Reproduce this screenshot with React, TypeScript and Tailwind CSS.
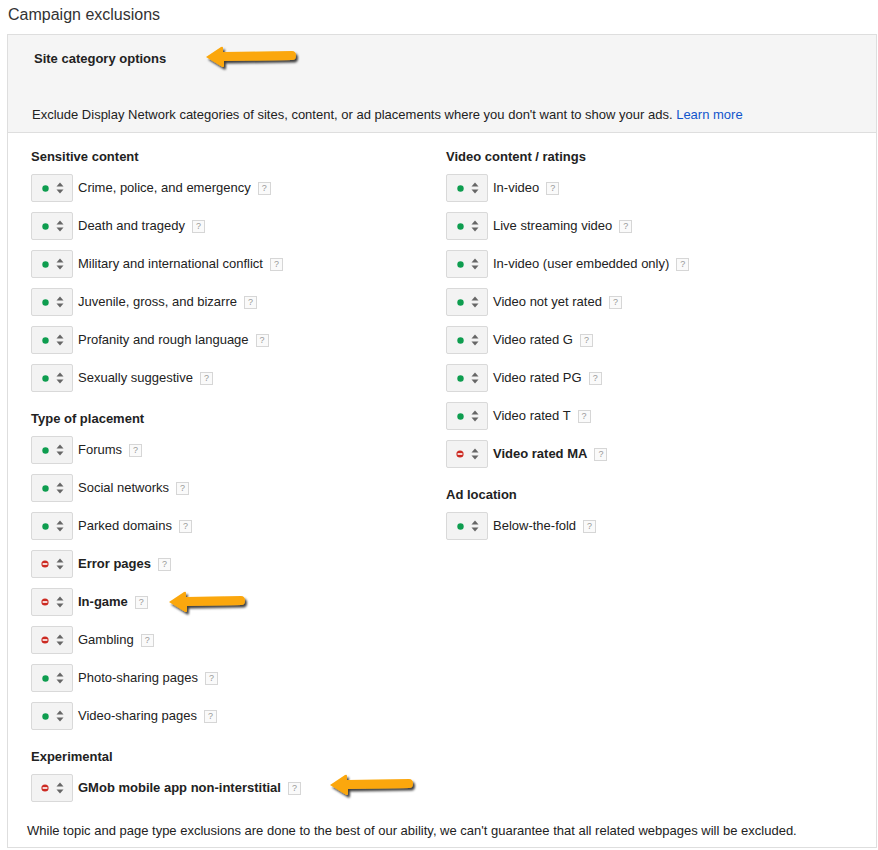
import React from "react";

type Item = { label: string; excluded?: boolean; bold?: boolean };

const sensitive: Item[] = [
  { label: "Crime, police, and emergency" },
  { label: "Death and tragedy" },
  { label: "Military and international conflict" },
  { label: "Juvenile, gross, and bizarre" },
  { label: "Profanity and rough language" },
  { label: "Sexually suggestive" },
];

const placement: Item[] = [
  { label: "Forums" },
  { label: "Social networks" },
  { label: "Parked domains" },
  { label: "Error pages", excluded: true, bold: true },
  { label: "In-game", excluded: true, bold: true },
  { label: "Gambling", excluded: true },
  { label: "Photo-sharing pages" },
  { label: "Video-sharing pages" },
];

const experimental: Item[] = [
  { label: "GMob mobile app non-interstitial", excluded: true, bold: true },
];

const video: Item[] = [
  { label: "In-video" },
  { label: "Live streaming video" },
  { label: "In-video (user embedded only)" },
  { label: "Video not yet rated" },
  { label: "Video rated G" },
  { label: "Video rated PG" },
  { label: "Video rated T" },
  { label: "Video rated MA", excluded: true, bold: true },
];

const adLocation: Item[] = [{ label: "Below-the-fold" }];

function StateButton({ excluded }: { excluded?: boolean }) {
  return (
    <div className="flex h-[28px] w-[42px] shrink-0 items-center rounded-[2px] border border-[#d9d9d9] bg-[#f3f3f3]">
      <div className="flex w-[26px] justify-center">
        {excluded ? (
          <svg width="8" height="8" viewBox="0 0 8 8">
            <circle cx="4" cy="4" r="3.6" fill="#cc2a22" />
            <rect x="1.6" y="3.2" width="4.8" height="1.6" fill="#fff" />
          </svg>
        ) : (
          <svg width="7" height="7" viewBox="0 0 7 7">
            <circle cx="3.5" cy="3.5" r="3.2" fill="#0e9d4f" />
          </svg>
        )}
      </div>
      <svg width="8" height="12" viewBox="0 0 8 12" className="ml-[-2px]">
        <path d="M4 0.5 L7.5 4.5 L0.5 4.5 Z" fill="#666" />
        <path d="M4 11.5 L7.5 7.5 L0.5 7.5 Z" fill="#666" />
      </svg>
    </div>
  );
}

function Help() {
  return (
    <span className="ml-[7px] inline-flex h-[13px] w-[13px] items-center justify-center border border-[#d6d6d6] bg-[#fafafa] text-[9px] leading-none text-[#999]">
      ?
    </span>
  );
}

function Row({ item }: { item: Item }) {
  return (
    <div className="flex h-[28px] items-center">
      <StateButton excluded={item.excluded} />
      <span
        className={`ml-[5px] text-[13px] leading-[16px] text-[#222] ${
          item.bold ? "font-bold" : ""
        }`}
      >
        {item.label}
      </span>
      <Help />
    </div>
  );
}

function Section({
  title,
  items,
  first,
}: {
  title: string;
  items: Item[];
  first?: boolean;
}) {
  return (
    <div className={first ? "" : "mt-[19px]"}>
      <div className="mb-[9px] text-[13px] font-bold leading-[16px] text-[#222]">
        {title}
      </div>
      <div className="flex flex-col gap-[10px]">
        {items.map((it) => (
          <Row key={it.label} item={it} />
        ))}
      </div>
    </div>
  );
}

function Arrow({ left, top, len }: { left: number; top: number; len: number }) {
  const L = len;
  const d = `M2 13 L17 3 Q19 2 19 4 L19 8 L${L - 4} 7 Q${L} 7 ${L} 11.5 Q${L} 16 ${
    L - 4
  } 16 L20 17 L20 21.5 Q20 24 17.5 22.5 Z`;
  return (
    <svg
      width={L + 8}
      height={32}
      viewBox={`0 0 ${L + 8} 32`}
      className="absolute"
      style={{ left, top }}
    >
      <defs>
        <filter id={`sh${left}`} x="-10%" y="-30%" width="130%" height="180%">
          <feDropShadow dx="2" dy="2.5" stdDeviation="1.3" floodColor="#000" floodOpacity="0.75" />
        </filter>
      </defs>
      <path d={d} fill="#fba70a" filter={`url(#sh${left})`} />
    </svg>
  );
}

export default function App() {
  return (
    <div
      className="relative w-[878px] bg-white text-[#222]"
      style={{ fontFamily: '"Liberation Sans", Arial, sans-serif' }}
    >
      <div className="h-[34px] pl-[8px] pt-[5px] text-[16px] leading-[20px] text-[#333]">
        Campaign exclusions
      </div>
      <div className="mx-[7px] w-[870px] border border-[#dedede]">
        <div className="border-b border-[#dedede] bg-[#f5f5f5] pb-[10px] pt-[16px]">
          <div className="pl-[26px] text-[13px] font-bold leading-[15px]">
            Site category options
          </div>
          <div className="mt-[41px] pl-[24px] text-[13px] leading-[15px]">
            Exclude Display Network categories of sites, content, or ad placements
            where you don't want to show your ads.{" "}
            <span className="text-[#1155cc]">Learn more</span>
          </div>
        </div>
        <div className="pb-[8px] pt-[16px]">
          <div className="grid grid-cols-[415px_1fr] pl-[23px]">
            <div>
              <Section title="Sensitive content" items={sensitive} first />
              <Section title="Type of placement" items={placement} />
              <Section title="Experimental" items={experimental} />
            </div>
            <div>
              <Section title="Video content / ratings" items={video} first />
              <Section title="Ad location" items={adLocation} />
            </div>
          </div>
          <div className="mt-[21px] pl-[19px] text-[13px] leading-[16px]">
            While topic and page type exclusions are done to the best of our ability,
            we can't guarantee that all related webpages will be excluded.
          </div>
        </div>
      </div>
      <Arrow left={204} top={44} len={92} />
      <Arrow left={167} top={589} len={78} />
      <Arrow left={328} top={772} len={85} />
    </div>
  );
}
